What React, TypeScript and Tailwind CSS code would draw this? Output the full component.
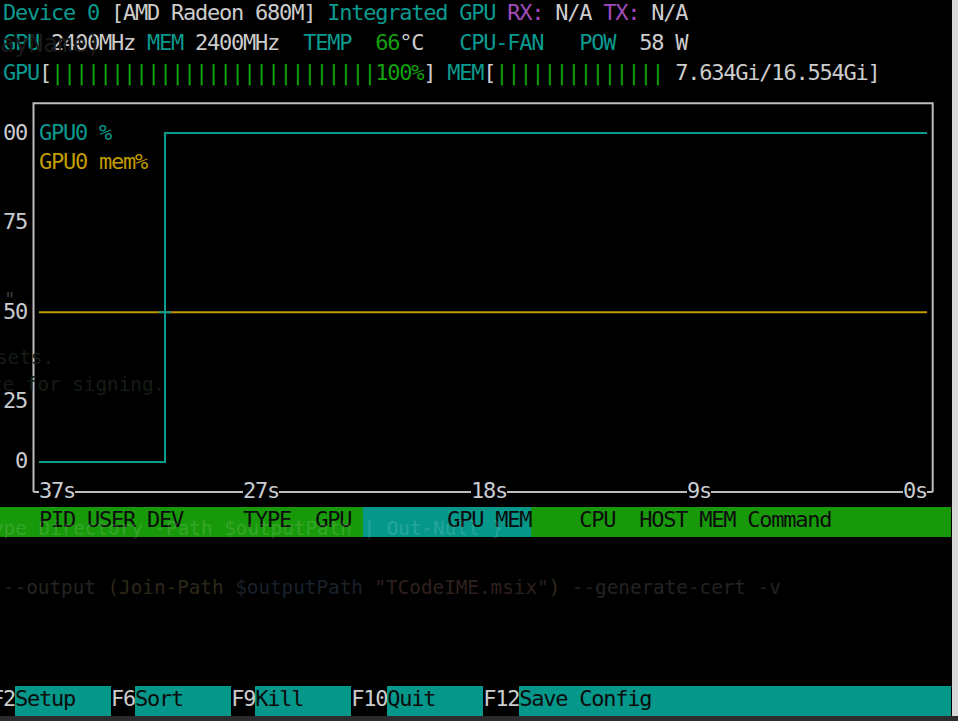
import React from 'react'

function Row({ children, className = '' }: { children?: React.ReactNode; className?: string }) {
  return <div className={`flex h-[29.83px] shrink-0 leading-[26px] whitespace-pre ${className}`}>{children}</div>
}

const T = 'text-[#0a9a8f]'
const G = 'text-[#13a10e]'
const M = 'text-[#a24cba]'

function Chart() {
  const axis = [
    [33.5, 39],
    [75, 243],
    [279, 471],
    [507, 687],
    [711, 903],
    [927, 932.7],
  ]
  return (
    <svg width="952" height="417.6" className="-ml-[3px] shrink-0 block">
      <path d="M33.5 403 V14.2 H932.7 V403" fill="none" stroke="#bdbdbd" strokeWidth="2" />
      {axis.map(([a, b]) => (
        <line key={a} x1={a} x2={b} y1="403" y2="403" stroke="#bdbdbd" strokeWidth="2" />
      ))}
      <path d="M39 223.2 H927" stroke="#c19c00" strokeWidth="2" />
      <path d="M39 373 H165 V44 H927" fill="none" stroke="#0a9a8f" strokeWidth="2" />
      <path d="M159 223.2 H171" stroke="#0a9a8f" strokeWidth="2" />

      <g fill="#c9ccd0">
        <text x="3" y="50.5">00</text>
        <text x="3" y="140">75</text>
        <text x="3" y="229.5">50</text>
        <text x="3" y="319">25</text>
        <text x="15" y="378.7">0</text>
        <text x="39" y="408.5">37s</text>
        <text x="243" y="408.5">27s</text>
        <text x="471" y="408.5">18s</text>
        <text x="687" y="408.5">9s</text>
        <text x="903" y="408.5">0s</text>
      </g>
      <text x="39" y="50.5" fill="#0a9a8f">GPU0 %</text>
      <text x="39" y="80.4" fill="#c19c00">GPU0 mem%</text>
    </svg>
  )
}

function FKey({ k, label, grow }: { k: string; label: string; grow?: boolean }) {
  return (
    <>
      <span className="text-[#cccccc]">{k}</span>
      <span className={`bg-[#06978b] text-[#0c0c0c] ${grow ? 'flex-1' : ''}`}>{label}</span>
    </>
  )
}

export default function App() {
  return (
    <div className="relative w-[958px] h-[721px] overflow-hidden bg-black font-['DejaVu_Sans_Mono',monospace] text-[22px] tracking-[-1.24px] text-[#cccccc]">
      <div className="flex flex-col w-[952px] pl-[3px]">
        <Row>
          <span className={T}>Device 0</span>
          <span> [AMD Radeon 680M]</span>
          <span className={T}> Integrated GPU</span>
          <span className={M}> RX:</span>
          <span> N/A</span>
          <span className={M}> TX:</span>
          <span> N/A</span>
        </Row>
        <Row>
          <span className={T}>GPU</span>
          <span> 2400MHz </span>
          <span className={T}>MEM</span>
          <span> 2400MHz  </span>
          <span className={T}>TEMP</span>
          <span>  </span>
          <span className={G}>66</span>
          <span>°C   </span>
          <span className={T}>CPU-FAN</span>
          <span>   </span>
          <span className={T}>POW</span>
          <span>  58 W</span>
        </Row>
        <Row>
          <span className={T}>GPU</span>
          <span>[</span>
          <span className={G}>{'|'.repeat(27)}100%</span>
          <span>] </span>
          <span className={T}>MEM</span>
          <span>[</span>
          <span className={G}>{'|'.repeat(14)}</span>
          <span> 7.634Gi/16.554Gi]</span>
        </Row>

        <Chart />

        <Row className="-ml-[3px] pl-[3px] w-[951px] bg-[#18990a] text-[#0c0c0c]">
          <span>   PID USER DEV     TYPE  GPU </span>
          <span className="bg-[#06978b]">       GPU MEM</span>
          <span>    CPU  HOST MEM Command</span>
        </Row>
        <Row />
        <Row />
        <Row />
        <Row />
        <Row />
        <Row className="w-[948px]">
          <span className="-ml-[12px] text-[#cccccc]">F2</span>
          <span className="bg-[#06978b] text-[#0c0c0c]">Setup   </span>
          <FKey k="F6" label="Sort    " />
          <FKey k="F9" label="Kill    " />
          <FKey k="F10" label="Quit    " />
          <FKey k="F12" label="Save Config" grow />
        </Row>
      </div>

      {/* faint text from the window behind the terminal */}
      <div className="pointer-events-none absolute inset-0 whitespace-pre tracking-normal">
        <div className="absolute left-0 top-[32px] text-[24px] leading-[24px] text-[#1a1a1a]">ayName)</div>
        <div className="absolute left-[4px] top-[290px] text-[19.3px] leading-[20px] text-[#3a3a3a]">"</div>
        <div className="absolute left-[-4px] top-[348px] text-[19.3px] leading-[20px] text-[#151c15]">sets.</div>
        <div className="absolute left-[-9px] top-[375px] text-[19.3px] leading-[20px] text-[#151c15]">ce for signing.</div>
        <div className="absolute left-[-8px] top-[519px] text-[19.3px] leading-[20px] text-white/15">
          ype Directory -Path $outputPath | Out-Null {'}'}
        </div>
        <div className="absolute left-[3px] top-[578px] text-[19.3px] leading-[20px]">
          <span className="text-[#242424]">--output </span>
          <span className="text-[#2e2818]">(Join-Path </span>
          <span className="text-[#19222c]">$outputPath </span>
          <span className="text-[#2e201d]">"TCodeIME.msix"</span>
          <span className="text-[#2e2818]">) </span>
          <span className="text-[#232323]">--generate-cert -v</span>
        </div>
      </div>

      <div className="absolute right-0 top-0 w-[6px] h-[716px] bg-[#d8d8d8]" />
      <div className="absolute left-0 bottom-0 w-full h-[5px] bg-[#2c2c2c]" />
    </div>
  )
}
